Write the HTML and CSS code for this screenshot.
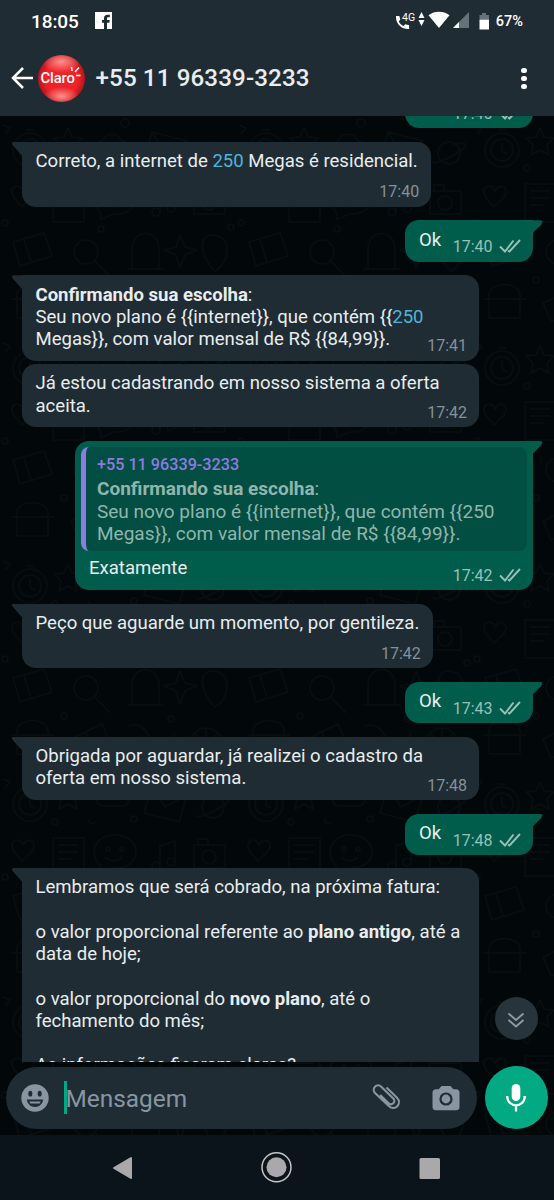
FILE: index.html
```html
<!DOCTYPE html>
<html lang="pt-BR">

<head>
    <meta charset="UTF-8">
    <meta name="viewport" content="width=device-width, initial-scale=1.0">
    <title>Conversa</title>
    <link rel="stylesheet" href="styles.css">
</head>

<body>
    <!-- shared icons -->
    <svg class="defs" width="0" height="0">
        <symbol id="ticks" viewBox="0 0 22 14">
            <path d="M1 7.500l5 5L14.500 1.500M9 11.500l1.500 1L21 1" fill="none" stroke="currentColor" stroke-width="1.900" />
        </symbol>
    </svg>

    <div class="phone">
        <header>
            <div class="status-bar">
                <span class="clock">18:05</span>
                <svg class="facebook" width="17" height="17" viewBox="0 0 17 17">
                    <path d="M0 0h17v17h-5v-6.300h2.300l.4-2.700H12V6.600c0-.9.4-1.300 1.300-1.300h1.500V2.800h-2.200C10.300 2.800 9 4.200 9 6.300V8H7v2.700h2V17H0z" fill="#fff" />
                </svg>
                <div class="status-icons">
                    <svg width="94" height="20" viewBox="0 0 94 20">
                        <path d="M0 5h3.300l1 3.600-1.500 1.800c1 2.200 2.600 3.700 4.700 4.700l1.800-1.800 3.800.9V18C5.600 18.600-.5 13 0 5z" fill="#fff" />
                        <text x="6" y="10" class="net">4G</text>
                        <path d="M25.500 1l3 6h-6zM25.500 15l3-6h-6z" fill="#fff" />
                        <path d="M32.500 4.200c6-4.600 15-4.600 21 0L43 17z" fill="#fff" />
                        <path d="M73 1v16H57z" fill="#66727a" />
                        <path d="M63 11v6h-6z" fill="#fff" />
                        <path d="M86 2h4v2h3v4h-9.500V4H86z" fill="#66727a" />
                        <path d="M83.500 8.500H93V18.500h-9.500z" fill="#fff" />
                    </svg>
                    <span class="percent">67%</span>
                </div>
            </div>
            <div class="toolbar">
                <svg class="back" width="22" height="22" viewBox="0 0 22 22">
                    <path d="M22 11H2M12 1L2 11l10 10" fill="none" stroke="#fff" stroke-width="2.500" />
                </svg>
                <div class="avatar">
                    <span>Claro</span>
                    <svg width="11" height="12" viewBox="0 0 11 12">
                        <path d="M2 5L1.500 1M5 6l4-4.500M6 9.500h4.500" fill="none" stroke="#fff" stroke-width="1.500" />
                    </svg>
                </div>
                <h1>+55 11 96339-3233</h1>
                <div class="menu"><i></i><i></i><i></i></div>
            </div>
        </header>

        <main>
            <svg class="wallpaper" width="554" height="1019">
                <pattern id="doodles" width="236" height="218" patternUnits="userSpaceOnUse">
                    <g fill="none" stroke="#070e10" stroke-width="1.600" stroke-linejoin="round">
                        <circle cx="30" cy="34" r="17" />
                        <circle cx="30" cy="34" r="11" />
                        <path d="M30 27v8l5 3M26 14h8" />
                        <path d="M68 12l4 9 10 1-7 7 2 10-9-5-9 5 2-10-7-7 10-1z" />
                        <path d="M103 36c-8 0-8-12 0-11 2-9 16-9 18 0 10-1 10 11 1 11z" />
                        <path d="M152 16l35 9-8 27-35-9zM152 16l13 21 22-12" />
                        <circle cx="213" cy="37" r="11" />
                        <path d="M198 45c-7 8 35-11 31-17-2-3-13 2-13 2" />
                        <path d="M17 85c-13-12 2-21 6-10 5-11 19-1 5 10l-6 6z" />
                        <path d="M53 68h31v38H53zM58 75h20M58 82h20M58 89h14" />
                        <path d="M114 65c14 0 22 8 22 17s-8 16-21 16c-5 0-11 6-15 5 4-8-6-9-6-21 0-9 8-17 20-17z" />
                        <circle cx="108" cy="79" r="2" />
                        <circle cx="122" cy="79" r="2" />
                        <path d="M105 87c5 5 13 5 17 0" />
                        <path d="M160 74v22M160 76l15-5v21" />
                        <circle cx="156" cy="96" r="4" />
                        <circle cx="171" cy="92" r="4" />
                        <path d="M194 75h31v23h-31zM198 75v-6h10v6" />
                        <circle cx="209" cy="87" r="7" />
                        <path d="M13 126l31-9 8 23-32 10zM24 124l7 22" />
                        <circle cx="86" cy="136" r="12" />
                        <path d="M95 145l15 16" />
                        <path d="M132 153v-19c0-22 27-22 27 0v19zM127 153h37" />
                        <path d="M180 119l5 12 12 3-12 5-5 13-4-13-12-5 12-3z" />
                        <path d="M211 119c23 0 19 28 4 36-12-11-19-34-4-36z" />
                        <path d="M17 179c0-14 31-14 31 0v23H17zM11 183h43" />
                        <path d="M71 187l31-15 9 20-32 14zM86 181l9 18" />
                        <path d="M129 174c12-4 17 5 23 14s20 4 23-8M134 196l10-12" />
                        <circle cx="206" cy="193" r="17" />
                        <path d="M189 193h34M206 176v34M194 181l24 24M194 205l24-24" />
                        <circle cx="55" cy="52" r="3" />
                        <circle cx="101" cy="113" r="3" />
                        <circle cx="5" cy="107" r="3" />
                        <circle cx="64" cy="164" r="3" />
                        <circle cx="171" cy="167" r="3" />
                        <circle cx="134" cy="49" r="3" />
                        <circle cx="231" cy="111" r="3" />
                        <circle cx="125" cy="7" r="4" />
                        <path d="M88 49l3 5 5-2M3 9l7 3-5 6M117 211l7-6" />
                    </g>
                </pattern>
                <rect width="554" height="1019" fill="url(#doodles)" />
            </svg>

            <div class="messages">
                <div class="bubble out short first">
                    <p>Ok</p>
                    <span class="meta">17:40 <svg><use href="#ticks" /></svg></span>
                </div>
                <div class="bubble in tail single">
                    <p>Correto, a internet de <a>250</a> Megas é residencial.</p>
                    <span class="meta">17:40</span>
                </div>
                <div class="bubble out tail short">
                    <p>Ok</p>
                    <span class="meta">17:40 <svg><use href="#ticks" /></svg></span>
                </div>
                <div class="bubble in tail wide">
                    <p><b>Confirmando sua escolha</b>:<br>Seu novo plano é {{internet}}, que contém {{<a>250</a><br>Megas}}, com valor mensal de R$ {{84,99}}.</p>
                    <span class="meta">17:41</span>
                </div>
                <div class="bubble in wide next">
                    <p>Já estou cadastrando em nosso sistema a oferta<br>aceita.</p>
                    <span class="meta">17:42</span>
                </div>
                <div class="bubble out tail reply">
                    <div class="quote">
                        <strong>+55 11 96339-3233</strong>
                        <p><b>Confirmando sua escolha</b>:<br>Seu novo plano é {{internet}}, que contém {{250<br>Megas}}, com valor mensal de R$ {{84,99}}.</p>
                    </div>
                    <p>Exatamente</p>
                    <span class="meta">17:42 <svg><use href="#ticks" /></svg></span>
                </div>
                <div class="bubble in tail single">
                    <p>Peço que aguarde um momento, por gentileza.</p>
                    <span class="meta">17:42</span>
                </div>
                <div class="bubble out tail short">
                    <p>Ok</p>
                    <span class="meta">17:43 <svg><use href="#ticks" /></svg></span>
                </div>
                <div class="bubble in tail wide">
                    <p>Obrigada por aguardar, já realizei o cadastro da<br>oferta em nosso sistema.</p>
                    <span class="meta">17:48</span>
                </div>
                <div class="bubble out tail short">
                    <p>Ok</p>
                    <span class="meta">17:48 <svg><use href="#ticks" /></svg></span>
                </div>
                <div class="bubble in tail wide last">
                    <p>Lembramos que será cobrado, na próxima fatura:<br><br>o valor proporcional referente ao <b>plano antigo</b>, até a<br>data de hoje;<br><br>o valor proporcional do <b>novo plano</b>, até o<br>fechamento do mês;<br><br>As informações ficaram claras?</p>
                </div>
            </div>

            <button class="scroll-down">
                <svg width="18" height="16" viewBox="0 0 18 16">
                    <path d="M1.500 1.500l7.500 6.500 7.500-6.500M1.500 8l7.500 6.500L16.500 8" fill="none" stroke="#8f9aa1" stroke-width="1.900" />
                </svg>
            </button>

            <div class="composer">
                <div class="input">
                    <svg width="28" height="28" viewBox="0 0 28 28">
                        <circle cx="14" cy="14" r="13.700" fill="#8796a0" />
                        <ellipse cx="9.300" cy="9.700" rx="2" ry="2.900" fill="#1f2c34" />
                        <ellipse cx="18.700" cy="9.700" rx="2" ry="2.900" fill="#1f2c34" />
                        <path d="M5.800 15.500h16.400c-.8 4.800-4.200 7.500-8.200 7.500s-7.400-2.700-8.200-7.500z" fill="#1f2c34" />
                        <path d="M8.300 17.500h11.400l-1.100 2H9.400z" fill="#8796a0" />
                    </svg>
                    <i class="caret"></i>
                    <span>Mensagem</span>
                    <svg class="clip" width="30" height="28" viewBox="0 0 30 28">
                        <path d="M15.500 3.500l10.500 10.300c5.600 5.800-2.200 14-8.200 8.200L4.300 9.300c-4.600-4.800 1.700-10.700 6.200-6.400l11.800 11.600c3.300 3.400-1.700 7.600-4.700 4.700L9.200 11" fill="none" stroke="#8796a0" stroke-width="2.100" />
                    </svg>
                    <svg class="camera" width="28" height="26" viewBox="0 0 28 26">
                        <path d="M9.500 1h9l2.800 3.300H24a3.500 3.500 0 0 1 3.500 3.500v14A3.500 3.500 0 0 1 24 25.300H4a3.500 3.500 0 0 1-3.500-3.500v-14A3.500 3.500 0 0 1 4 4.300h2.700z" fill="#8796a0" />
                        <circle cx="14" cy="14" r="5.500" fill="#8796a0" stroke="#1f2c34" stroke-width="2.200" />
                    </svg>
                </div>
                <button class="mic">
                    <svg width="20" height="28" viewBox="0 0 20 28">
                        <rect x="5.700" y="0" width="8.600" height="17" rx="4.300" fill="#fff" />
                        <path d="M1.200 12c.2 12.500 17.400 12.500 17.600 0M10 21v6.500" fill="none" stroke="#fff" stroke-width="2.300" />
                    </svg>
                </button>
            </div>
        </main>

        <nav>
            <svg width="554" height="65" viewBox="0 0 554 65">
                <path d="M131 23v20L114 33z" fill="#a9a9ab" stroke="#a9a9ab" stroke-width="2" stroke-linejoin="round" />
                <circle cx="276.500" cy="32.300" r="14.500" fill="none" stroke="#c4c5c7" stroke-width="1.500" />
                <circle cx="276.500" cy="32.300" r="10" fill="#a9a9ab" />
                <rect x="419.500" y="23" width="20.500" height="21" rx="1.500" fill="#a9a9ab" />
            </svg>
        </nav>
    </div>
</body>

</html>
```
FILE: styles.css
```css
* {
    box-sizing: border-box;
}

body {
    margin: 0;
    background: #020709;
    font-family: Roboto, sans-serif;
    color: #e9edef;
}

svg {
    display: block;
    flex-shrink: 0;
}

.defs {
    position: absolute;
}

p,
h1 {
    margin: 0;
}

button {
    border: none;
    padding: 0;
    display: flex;
    align-items: center;
    justify-content: center;
    border-radius: 50%;
}

.phone {
    width: 554px;
    height: 1200px;
    display: flex;
    flex-direction: column;
    overflow: hidden;
}

/* header */
header {
    height: 116px;
    background: #1f2c34;
}

.status-bar {
    height: 41px;
    display: flex;
    align-items: center;
    padding: 0 31px;
    color: #fff;
}

.clock {
    font-size: 19px;
    font-weight: 500;
    letter-spacing: -0.1px;
    width: 64px;
    padding-top: 1px;
}

.status-icons {
    display: flex;
    align-items: center;
    margin-left: auto;
}

.net {
    font-size: 10.5px;
    fill: #fff;
}

.percent {
    font-size: 14.5px;
    font-weight: 500;
    margin-left: 6px;
    padding-top: 1px;
}

.toolbar {
    height: 74px;
    display: flex;
    align-items: center;
    padding: 0 27px 0 11px;
}

.avatar {
    width: 47px;
    height: 47px;
    margin-left: 5px;
    border-radius: 50%;
    background: radial-gradient(ellipse 38% 20% at 50% 88%, #ff8f8c, transparent),
        radial-gradient(ellipse 42% 24% at 50% 14%, #ff8f8a, transparent),
        radial-gradient(circle closest-side, #ee2229 70%, #b5141b 100%);
    display: flex;
    align-items: center;
    padding-left: 2.5px;
    color: #fff;
    font-size: 14.8px;
    font-weight: 500;
    letter-spacing: -0.1px;
}

.avatar svg {
    margin: -12px 0 0 -5px;
}

h1 {
    margin-left: 10.5px;
    font-size: 24.2px;
    font-weight: 500;
    letter-spacing: 0.1px;
}

.menu {
    display: flex;
    flex-direction: column;
    gap: 2.5px;
    margin: 1px 0 0 auto;
}

.menu i {
    width: 5.6px;
    height: 5.6px;
    border-radius: 50%;
    background: #fff;
}

/* chat */
main {
    position: relative;
    height: 1019px;
}

.wallpaper {
    position: absolute;
    top: 0;
    left: 0;
}

.messages {
    position: relative;
    height: 945.5px;
    overflow: hidden;
    display: flex;
    flex-direction: column;
    align-items: flex-start;
    padding: 0 21.5px;
}

.bubble {
    position: relative;
    flex-shrink: 0;
    display: flex;
    flex-direction: column;
    margin-top: 13.6px;
    padding: 8.4px 12px 5.4px 14px;
    border-radius: 14px;
    font-size: 18.56px;
    line-height: 22.3px;
    white-space: nowrap;
}

.in {
    background: #1f2c34;
}

.out {
    align-self: flex-end;
    background: #005d4b;
}

.wide {
    width: 457.5px;
}

.next {
    margin-top: 3.3px;
}

.last {
    margin-top: 13.2px;
    padding-top: 8px;
}

.in.tail {
    border-top-left-radius: 0;
}

.out.tail {
    border-top-right-radius: 0;
}

.tail::before {
    content: '';
    position: absolute;
    top: 0;
    width: 11px;
    height: 14px;
}

.in.tail::before {
    left: -10px;
    background: #1f2c34;
    clip-path: polygon(2px 0, 100% 0, 100% 100%, 9px 12px, 1px 3px, 0 1px);
}

.out.tail::before {
    right: -10px;
    background: #005d4b;
    clip-path: polygon(0 0, 9px 0, 11px 1px, 10px 4px, 2px 12px, 0 100%);
}

.bubble a {
    color: #4eb4df;
}

.meta {
    align-self: flex-end;
    display: flex;
    align-items: center;
    gap: 6px;
    margin-top: -13.1px;
    font-size: 16px;
    line-height: 18px;
    color: #84919a;
}

.meta svg {
    width: 22px;
    height: 14px;
    margin-top: -2px;
}

.out .meta {
    color: #9ac0b8;
}

.single {
    padding-right: 13.5px;
}

.single .meta {
    margin: 10.6px -1.5px 0 0;
}

.short {
    flex-direction: row;
    justify-content: space-between;
    width: 127.5px;
    height: 41.3px;
}

.short .meta {
    margin: 0;
}

.first {
    margin-top: -28.9px;
}

.reply {
    width: 457.5px;
    padding-top: 6.5px;
}

.quote {
    height: 104px;
    margin: 0 -6px 6px -8px;
    padding: 7.5px 11px 0;
    border-left: 5px solid #8f7be0;
    border-radius: 8px;
    background: #024e42;
    color: #91b5ad;
    font-size: 19px;
}

.quote strong {
    display: block;
    margin-bottom: 3.5px;
    font-size: 16.2px;
    font-weight: 500;
    line-height: 20px;
    color: #8f7be0;
}

.scroll-down {
    position: absolute;
    right: 16.5px;
    top: 881px;
    width: 43px;
    height: 43px;
    background: #28343c;
}

.scroll-down svg {
    margin-top: 3px;
}

/* message box */
.composer {
    position: relative;
    display: flex;
    align-items: center;
    gap: 7.5px;
    padding: 4.5px 6px 0;
}

.input {
    width: 471px;
    height: 62px;
    border-radius: 31px;
    background: #1f2c34;
    display: flex;
    align-items: center;
    padding: 0 17px 0 15px;
    font-size: 24.4px;
    color: #8796a0;
}

.input span {
    margin: 1px 0 0 -1.5px;
}

.caret {
    width: 3px;
    height: 33px;
    margin-left: 15px;
    background: #00a884;
}

.clip {
    margin-left: auto;
}

.camera {
    margin-left: 31px;
}

.mic {
    width: 63px;
    height: 63px;
    background: #03a983;
}

/* system buttons */
nav {
    height: 65px;
    background: #0b141b;
}
```
